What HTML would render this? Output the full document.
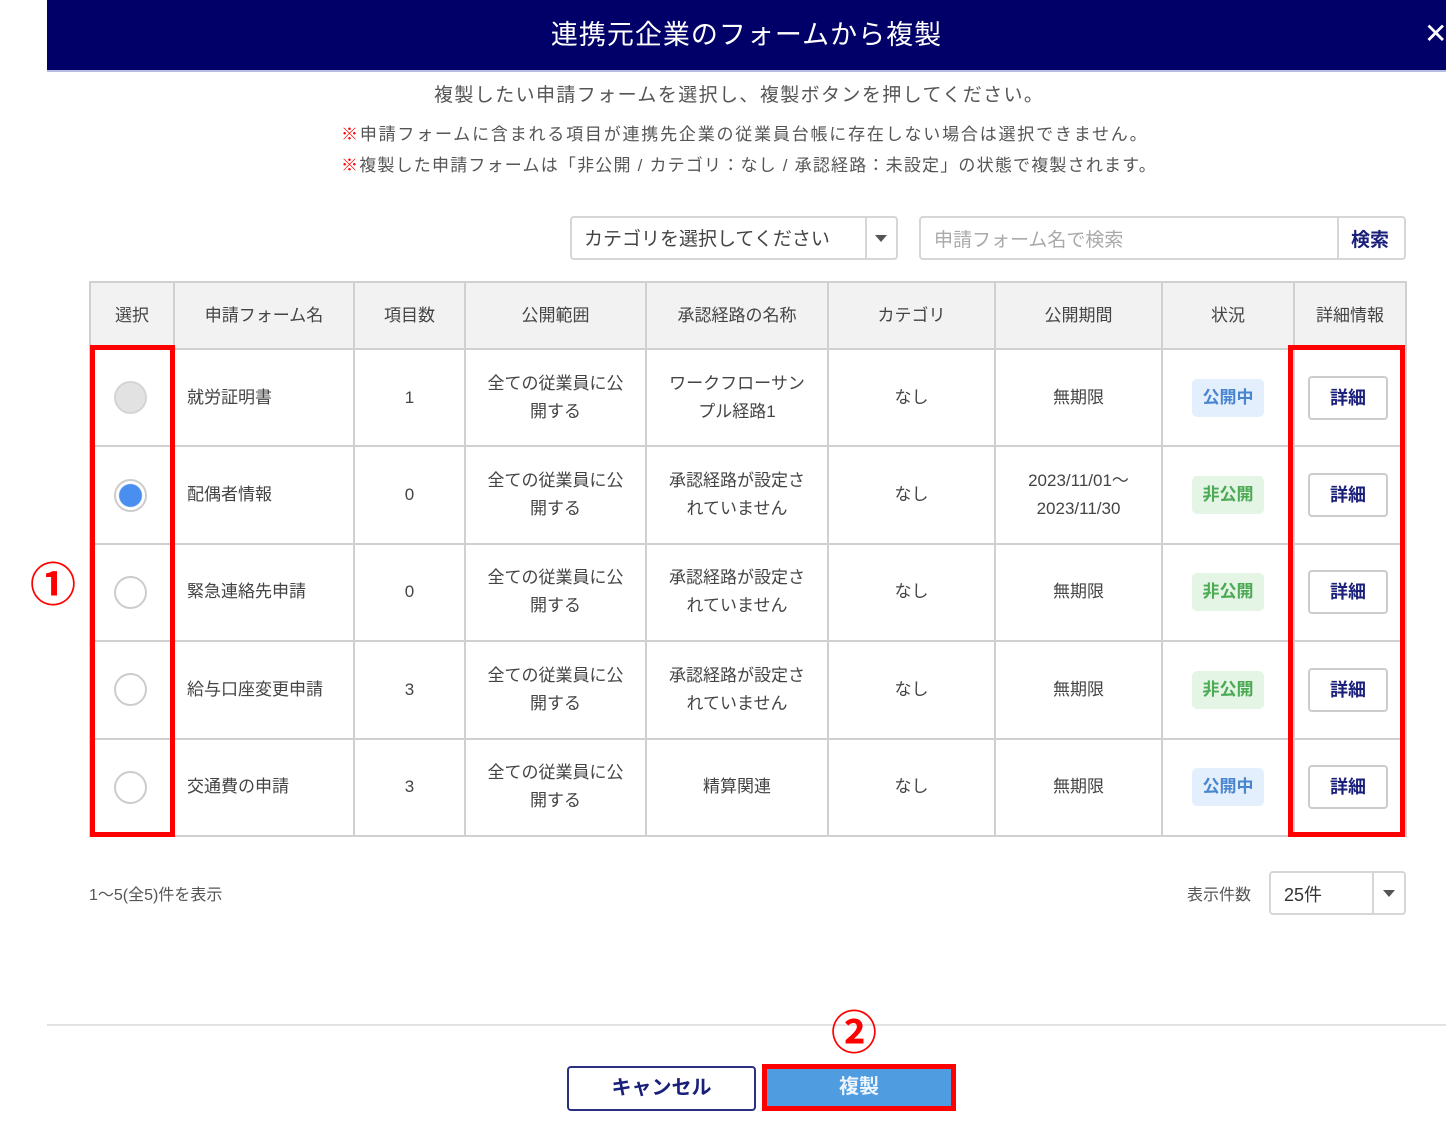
<!DOCTYPE html>
<html><head><meta charset="utf-8"><style>
*{box-sizing:border-box;margin:0;padding:0}
body{width:1446px;height:1125px;background:#fff;position:relative;overflow:hidden;font-family:"Liberation Sans","Noto Sans CJK JP",sans-serif;color:#444}
.abs{position:absolute}
.hdr{left:47px;top:0;width:1399px;height:72px;background:#000068;border-bottom:2px solid #b8bce0;color:#fff;font-size:27px;text-align:center;line-height:70px;letter-spacing:1px}
.c{text-align:center}
table{position:absolute;left:89px;top:281px;border-collapse:collapse;table-layout:fixed}
td,th{border:2px solid #d0d0d0;font-size:17px;color:#444;text-align:center;font-weight:normal;line-height:28px}
th{background:#f2f2f2;height:67px}
td{height:97.4px}
td.l{text-align:left;padding-left:12px}
.radio{display:inline-block;width:33px;height:33px;border-radius:50%;border:2px solid #ccc;vertical-align:middle;margin-left:-4px}
.badge{display:inline-block;width:72px;height:38px;border-radius:5px;line-height:38px;font-weight:bold;font-size:17px}
.pub{background:#e3effc;color:#4a86d0}
.npub{background:#e4f4e5;color:#4caa55}
.det{display:inline-block;width:80px;height:44px;border:2px solid #ccc;border-radius:4px;line-height:40px;color:#1a1f7a;font-weight:bold;font-size:18px;margin-left:-4px}
.red{border:5px solid #f00}
</style></head><body>
<div class="abs hdr">連携元企業のフォームから複製</div>
<div class="abs" style="left:1424px;top:18px;color:#fff;font-size:28px;line-height:32px">✕</div>
<div class="abs" style="left:434px;top:80px;font-size:19px;color:#555;letter-spacing:1.4px">複製したい申請フォームを選択し、複製ボタンを押してください。</div>
<div class="abs" style="left:341px;top:120px;font-size:17px;color:#555;letter-spacing:1.8px"><span style="color:#f00">※</span>申請フォームに含まれる項目が連携先企業の従業員台帳に存在しない場合は選択できません。</div>
<div class="abs" style="left:341px;top:151px;font-size:17px;color:#555;letter-spacing:1.2px"><span style="color:#f00">※</span>複製した申請フォームは「非公開 / カテゴリ：なし / 承認経路：未設定」の状態で複製されます。</div>

<div class="abs" style="left:570px;top:216px;width:328px;height:44px;border:2px solid #d6d6d6;border-radius:4px">
<div class="abs" style="left:12px;top:6px;font-size:19px;color:#444">カテゴリを選択してください</div>
<div class="abs" style="left:293px;top:0;width:2px;height:40px;background:#d6d6d6"></div>
<div class="abs" style="left:303px;top:17px;width:0;height:0;border-left:6px solid transparent;border-right:6px solid transparent;border-top:7px solid #555"></div>
</div>
<div class="abs" style="left:919px;top:216px;width:487px;height:44px;border:2px solid #d6d6d6;border-radius:4px">
<div class="abs" style="left:13px;top:7px;font-size:19px;color:#aaa">申請フォーム名で検索</div>
<div class="abs" style="left:416px;top:0;width:2px;height:40px;background:#d6d6d6"></div>
<div class="abs" style="left:430px;top:7px;font-size:19px;color:#1a1f7a;font-weight:bold">検索</div>
</div>

<table>
<colgroup><col style="width:84px"><col style="width:180px"><col style="width:111px"><col style="width:181px"><col style="width:182px"><col style="width:167px"><col style="width:167px"><col style="width:132px"><col style="width:112px"></colgroup>
<tr><th>選択</th><th>申請フォーム名</th><th>項目数</th><th>公開範囲</th><th>承認経路の名称</th><th>カテゴリ</th><th>公開期間</th><th>状況</th><th>詳細情報</th></tr>
<tr><td><span class="radio" style="background:#e2e2e2;border-color:#d4d4d4"></span></td><td class="l">就労証明書</td><td>1</td><td>全ての従業員に公<br>開する</td><td>ワークフローサン<br>プル経路1</td><td>なし</td><td>無期限</td><td><span class="badge pub">公開中</span></td><td><span class="det">詳細</span></td></tr>
<tr><td><span class="radio" style="background:radial-gradient(circle,#4a8ff0 0 11px,#fff 12px)"></span></td><td class="l">配偶者情報</td><td>0</td><td>全ての従業員に公<br>開する</td><td>承認経路が設定さ<br>れていません</td><td>なし</td><td>2023/11/01～<br>2023/11/30</td><td><span class="badge npub">非公開</span></td><td><span class="det">詳細</span></td></tr>
<tr><td><span class="radio"></span></td><td class="l">緊急連絡先申請</td><td>0</td><td>全ての従業員に公<br>開する</td><td>承認経路が設定さ<br>れていません</td><td>なし</td><td>無期限</td><td><span class="badge npub">非公開</span></td><td><span class="det">詳細</span></td></tr>
<tr><td><span class="radio"></span></td><td class="l">給与口座変更申請</td><td>3</td><td>全ての従業員に公<br>開する</td><td>承認経路が設定さ<br>れていません</td><td>なし</td><td>無期限</td><td><span class="badge npub">非公開</span></td><td><span class="det">詳細</span></td></tr>
<tr><td><span class="radio"></span></td><td class="l">交通費の申請</td><td>3</td><td>全ての従業員に公<br>開する</td><td>精算関連</td><td>なし</td><td>無期限</td><td><span class="badge pub">公開中</span></td><td><span class="det">詳細</span></td></tr>
</table>

<div class="abs red" style="left:90px;top:345px;width:85px;height:492px"></div>
<div class="abs red" style="left:1288px;top:345px;width:117px;height:492px"></div>
<div class="abs" style="left:30px;top:557px;color:#f00;font-size:46px;font-weight:bold;line-height:56px">①</div>

<div class="abs" style="left:89px;top:881px;font-size:16px;color:#555">1～5(全5)件を表示</div>
<div class="abs" style="left:1187px;top:881px;font-size:16px;color:#555">表示件数</div>
<div class="abs" style="left:1269px;top:871px;width:137px;height:44px;border:2px solid #d6d6d6;border-radius:4px">
<div class="abs" style="left:13px;top:8px;font-size:18px;color:#333">25件</div>
<div class="abs" style="left:101px;top:0;width:2px;height:40px;background:#d6d6d6"></div>
<div class="abs" style="left:112px;top:17px;width:0;height:0;border-left:6px solid transparent;border-right:6px solid transparent;border-top:7px solid #555"></div>
</div>

<div class="abs" style="left:47px;top:1024px;width:1399px;height:2px;background:#e2e2e2"></div>
<div class="abs" style="left:831px;top:1005px;color:#f00;font-size:46px;font-weight:bold;line-height:56px">②</div>
<div class="abs c" style="left:567px;top:1066px;width:189px;height:45px;border:2px solid #2a2f80;border-radius:4px;line-height:41px;font-size:20px;font-weight:bold;color:#1a1f7a">キャンセル</div>
<div class="abs" style="left:762px;top:1064px;width:194px;height:47px;background:#f00;padding:5px"><div class="c" style="width:100%;height:100%;background:#4f9de0;color:#eef5fc;font-size:20px;font-weight:bold;line-height:37px">複製</div></div>
</body></html>
